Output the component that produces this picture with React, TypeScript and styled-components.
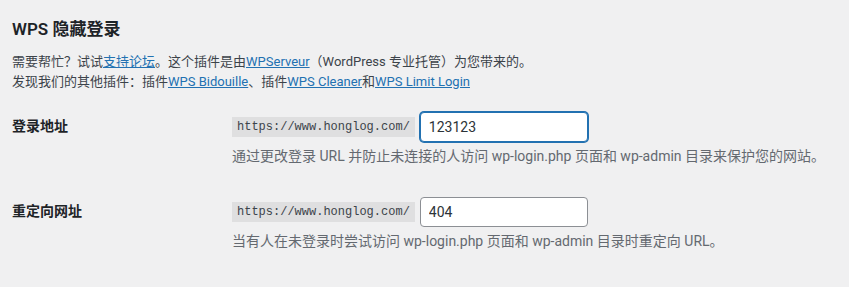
import { createGlobalStyle, styled } from "styled-components";

type FieldProps = {
  label: string;
  prefix: string;
  value: string;
  focused?: boolean;
  description: string;
};

const fields: FieldProps[] = [
  {
    label: "登录地址",
    prefix: "https://www.honglog.com/",
    value: "123123",
    focused: true,
    description:
      "通过更改登录 URL 并防止未连接的人访问 wp-login.php 页面和 wp-admin 目录来保护您的网站。",
  },
  {
    label: "重定向网址",
    prefix: "https://www.honglog.com/",
    value: "404",
    description: "当有人在未登录时尝试访问 wp-login.php 页面和 wp-admin 目录时重定向 URL。",
  },
];

const GlobalStyle = createGlobalStyle`
  body {
    margin: 0;
    background: #f0f0f1;
    color: #3c434a;
    font-family: "Segoe UI", Roboto, "Noto Sans", "Noto Sans CJK SC", sans-serif;
    font-size: 13px;
  }
`;

const Wrap = styled.div`
  padding: 0 12px;
`;

const Title = styled.h2`
  margin: 18px 0 12px;
  font-size: 17px;
  line-height: 22px;
  font-weight: 600;
  color: #1d2327;
`;

const Intro = styled.p`
  margin: 0;
  line-height: 19.5px;
`;

const A = styled.a`
  color: #2271b1;
  text-decoration: underline;
`;

const FormTable = styled.div`
  margin-top: 6px;
`;

const Row = styled.div`
  display: grid;
  grid-template-columns: 210px 1fr;
`;

const Label = styled.div`
  padding: 20px 10px 20px 0;
  font-size: 14px;
  line-height: 18px;
  font-weight: 600;
  color: #1d2327;
`;

const Cell = styled.div`
  padding: 15px 10px;
`;

const InputLine = styled.div`
  display: flex;
  align-items: center;
  gap: 5px;
`;

const Prefix = styled.code`
  display: inline-block;
  padding: 3px 5px 2px;
  line-height: 15px;
  font-family: "Liberation Mono", monospace;
  font-size: 12px;
  color: #3c434a;
  background: rgba(0, 0, 0, 0.07);
`;

const Input = styled.input<{ $focused?: boolean }>`
  box-sizing: border-box;
  width: 168px;
  height: 30px;
  padding: 0 8px;
  border-radius: 4px;
  font-family: inherit;
  font-size: 14px;
  color: #2c3338;
  background: #fff;
  outline: none;
  border: 1px solid ${(p) => (p.$focused ? "#2271b1" : "#8c8f94")};
  box-shadow: ${(p) => (p.$focused ? "0 0 0 1px #2271b1" : "none")};
`;

const Description = styled.p`
  margin: 4px 0 0;
  font-size: 14px;
  line-height: 21px;
  color: #646970;
`;

export default function App() {
  return (
    <>
      <GlobalStyle />
      <Wrap>
        <Title>WPS 隐藏登录</Title>
        <Intro>
          需要帮忙？试试<A href="#">支持论坛</A>。这个插件是由<A href="#">WPServeur</A>（WordPress 专业托管）为您带来的。
          <br />
          发现我们的其他插件：插件<A href="#">WPS Bidouille</A>、插件<A href="#">WPS Cleaner</A>和
          <A href="#">WPS Limit Login</A>
        </Intro>
        <FormTable>
          {fields.map((f) => (
            <Row key={f.label}>
              <Label>{f.label}</Label>
              <Cell>
                <InputLine>
                  <Prefix>{f.prefix}</Prefix>
                  <Input $focused={f.focused} defaultValue={f.value} />
                </InputLine>
                <Description>{f.description}</Description>
              </Cell>
            </Row>
          ))}
        </FormTable>
      </Wrap>
    </>
  );
}
